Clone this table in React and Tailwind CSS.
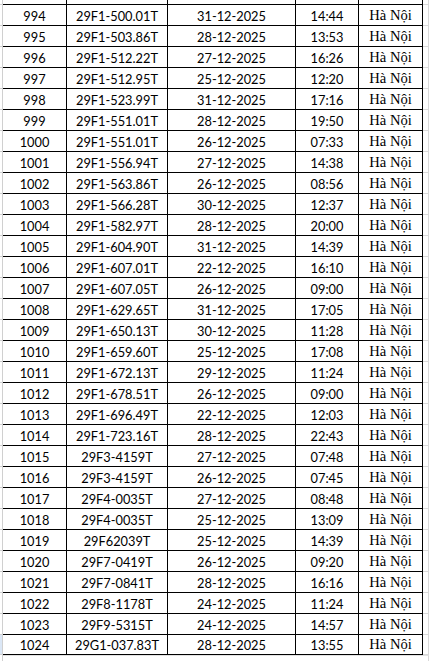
const rows = [
  ["994", "29F1-500.01T", "31-12-2025", "14:44"],
  ["995", "29F1-503.86T", "28-12-2025", "13:53"],
  ["996", "29F1-512.22T", "27-12-2025", "16:26"],
  ["997", "29F1-512.95T", "25-12-2025", "12:20"],
  ["998", "29F1-523.99T", "31-12-2025", "17:16"],
  ["999", "29F1-551.01T", "28-12-2025", "19:50"],
  ["1000", "29F1-551.01T", "26-12-2025", "07:33"],
  ["1001", "29F1-556.94T", "27-12-2025", "14:38"],
  ["1002", "29F1-563.86T", "26-12-2025", "08:56"],
  ["1003", "29F1-566.28T", "30-12-2025", "12:37"],
  ["1004", "29F1-582.97T", "28-12-2025", "20:00"],
  ["1005", "29F1-604.90T", "31-12-2025", "14:39"],
  ["1006", "29F1-607.01T", "22-12-2025", "16:10"],
  ["1007", "29F1-607.05T", "26-12-2025", "09:00"],
  ["1008", "29F1-629.65T", "31-12-2025", "17:05"],
  ["1009", "29F1-650.13T", "30-12-2025", "11:28"],
  ["1010", "29F1-659.60T", "25-12-2025", "17:08"],
  ["1011", "29F1-672.13T", "29-12-2025", "11:24"],
  ["1012", "29F1-678.51T", "26-12-2025", "09:00"],
  ["1013", "29F1-696.49T", "22-12-2025", "12:03"],
  ["1014", "29F1-723.16T", "28-12-2025", "22:43"],
  ["1015", "29F3-4159T", "27-12-2025", "07:48"],
  ["1016", "29F3-4159T", "26-12-2025", "07:45"],
  ["1017", "29F4-0035T", "27-12-2025", "08:48"],
  ["1018", "29F4-0035T", "25-12-2025", "13:09"],
  ["1019", "29F62039T", "25-12-2025", "14:39"],
  ["1020", "29F7-0419T", "26-12-2025", "09:20"],
  ["1021", "29F7-0841T", "28-12-2025", "16:16"],
  ["1022", "29F8-1178T", "24-12-2025", "11:24"],
  ["1023", "29F9-5315T", "24-12-2025", "14:57"],
  ["1024", "29G1-037.83T", "28-12-2025", "13:55"],
];

const sans = "flex items-end justify-center border-r border-black pb-[2px] leading-none text-[12.8px] text-black font-['Lato',sans-serif]";
const serif = "flex items-end justify-center border-r border-black pb-[2px] leading-none text-[14.6px] text-black font-['Liberation_Serif',serif]";

function Row({ r, last }) {
  return (
    <div className={last ? "flex h-[20px]" : "flex h-[21px]"}>
      <div className={last ? "w-[3px] border-r border-b border-[#d0d0d0] bg-[#dbe7f6]" : "w-[3px] border-r border-b border-[#d0d0d0]"} />
      <div className="grid w-[420px] grid-cols-[64px_101px_128px_63px_64px] border-b border-black">
        <div className={sans}>{r[0]}</div>
        <div className={sans}>{r[1]}</div>
        <div className={sans}>{r[2]}</div>
        <div className={sans}>{r[3]}</div>
        <div className={serif}>Hà Nội</div>
      </div>
      <div className="w-[6px] border-r border-b border-[#d9d9d9]" />
    </div>
  );
}

export default function App() {
  return (
    <div className="flex h-[661px] w-[429px] flex-col overflow-hidden bg-white">
      <div className="flex h-[5px]">
        <div className="w-[3px] border-r border-b border-[#d0d0d0]" />
        <div className="grid w-[420px] grid-cols-[64px_101px_128px_63px_64px] border-b border-black">
          <div className="border-r border-black" />
          <div className="border-r border-black" />
          <div className="border-r border-black" />
          <div className="border-r border-black" />
          <div className="border-r border-black" />
        </div>
        <div className="w-[6px] border-r border-b border-[#d9d9d9]" />
      </div>
      {rows.map((r, i) => (
        <Row key={r[0]} r={r} last={i === rows.length - 1} />
      ))}
      <div className="flex flex-1">
        <div className="w-[3px] border-r border-[#d0d0d0]" />
        <div className="w-[420px] border-t border-[#e2e2e2]" />
        <div className="w-[6px] border-r border-t border-[#e2e2e2] border-r-[#d9d9d9]" />
      </div>
    </div>
  );
}
